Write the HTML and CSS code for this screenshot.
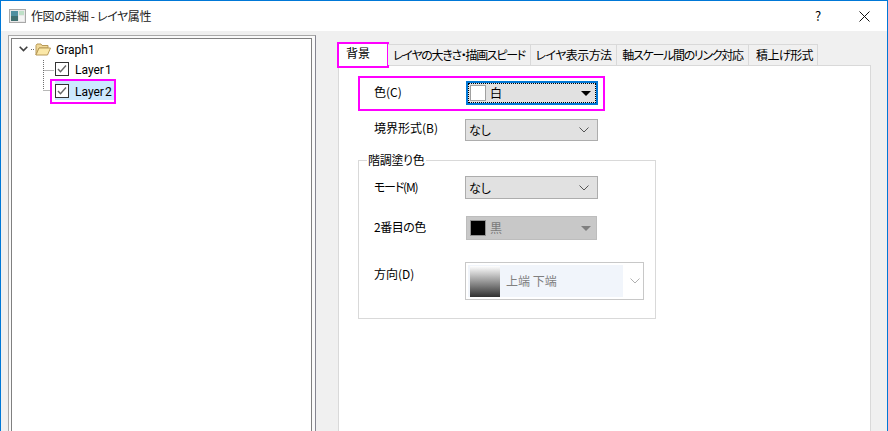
FILE: index.html
```html
<!DOCTYPE html>
<html lang="ja">
<head>
<meta charset="utf-8">
<title>作図の詳細 - レイヤ属性</title>
<link rel="stylesheet" href="styles.css">
</head>
<body>
<div class="window">
  <header class="titlebar">
    <svg class="app-icon" width="17" height="14" viewBox="0 0 17 14">
      <rect x="0.5" y="0.5" width="16" height="13" fill="#e8e8e8" stroke="#a8a8a8"/>
      <rect x="2" y="2" width="7" height="10" fill="#4f8f9f"/>
      <rect x="2" y="7" width="7" height="5" fill="#3f6f6f"/>
      <rect x="10" y="2" width="5" height="4" fill="#bfe0c8"/>
      <rect x="10" y="7" width="5" height="5" fill="#f4f4f4"/>
    </svg>
    <span class="title">作図の詳細 - レイヤ属性</span>
    <span class="help">?</span>
    <svg class="close" width="11" height="11" viewBox="0 0 11 11">
      <path d="M0.5 0.5L10.5 10.5M10.5 0.5L0.5 10.5" stroke="#111" stroke-width="1" fill="none"/>
    </svg>
  </header>
  <div class="body">
    <aside class="tree-frame">
      <div class="tree">
        <svg class="tree-lines" width="30" height="60" viewBox="0 0 30 60">
          <path d="M5 10.5H9M17.5 21V51M17.5 31.5H28M17.5 51.5H24" stroke="#707070" stroke-width="1" stroke-dasharray="1 1" fill="none"/>
        </svg>
        <div class="tree-row root">
          <svg class="chevron" width="9" height="6" viewBox="0 0 9 6"><path d="M0.7 0.8L4.5 4.6L8.3 0.8" stroke="#404040" stroke-width="1.6" fill="none"/></svg>
          <svg class="folder" width="16" height="13" viewBox="0 0 16 13">
            <path d="M1 2.5L2 1H6L7 2.5H13V5H4L1 12Z" fill="#f0d898" stroke="#b89a58"/>
            <path d="M1 12L4 5H15.5L12.5 12Z" fill="#fbe8a8" stroke="#b89a58"/>
          </svg>
          <span class="node">Graph1</span>
        </div>
        <div class="tree-row leaf">
          <svg class="check" width="14" height="14" viewBox="0 0 14 14"><rect x="0.5" y="0.5" width="13" height="13" fill="#fff" stroke="#333"/><path d="M3 7L5.5 9.8L11 3.5" stroke="#666" stroke-width="1.4" fill="none"/></svg>
          <span class="node">Layer 1</span>
        </div>
        <div class="tree-row selected">
          <svg class="check" width="14" height="14" viewBox="0 0 14 14"><rect x="0.5" y="0.5" width="13" height="13" fill="#fff" stroke="#333"/><path d="M3 7L5.5 9.8L11 3.5" stroke="#666" stroke-width="1.4" fill="none"/></svg>
          <span class="node">Layer 2</span>
        </div>
      </div>
    </aside>
    <main class="props">
      <nav class="tabs">
        <div class="tab active t0">背景</div>
        <div class="tab t1">レイヤの大きさ・描画スピード</div>
        <div class="tab t2">レイヤ表示方法</div>
        <div class="tab t3">軸スケール間のリンク対応</div>
        <div class="tab t4">積上げ形式</div>
      </nav>
      <section class="page">
        <div class="row marked">
          <label class="lbl">色(C)</label>
          <div class="select focus">
            <div class="focus-inner">
              <span class="swatch white"></span><span class="val">白</span>
              <span class="tri"></span>
            </div>
          </div>
        </div>
        <div class="row plain border-row">
          <label class="lbl">境界形式(B)</label>
          <div class="select combo">
            <span>なし</span>
            <svg class="down" width="10" height="6" viewBox="0 0 10 6"><path d="M0.5 0.5L5 5L9.5 0.5" stroke="#555" fill="none"/></svg>
          </div>
        </div>
        <div class="group">
          <div class="legend">階調塗り色</div>
          <div class="row grp mode">
            <label class="lbl">モード(M)</label>
            <div class="select combo tall">
              <span>なし</span>
              <svg class="down" width="10" height="6" viewBox="0 0 10 6"><path d="M0.5 0.5L5 5L9.5 0.5" stroke="#555" fill="none"/></svg>
            </div>
          </div>
          <div class="row grp second">
            <label class="lbl">2番目の色</label>
            <div class="select disabled">
              <span class="swatch black"></span><span class="val">黒</span>
              <span class="tri grey"></span>
            </div>
          </div>
          <div class="row grp direction">
            <label class="lbl">方向(D)</label>
            <div class="select dir">
              <div class="dir-inner">
                <span class="gradient"></span>
                <span>上端 下端</span>
              </div>
              <svg class="down" width="10" height="6" viewBox="0 0 10 6"><path d="M0.5 0.5L5 5L9.5 0.5" stroke="#b0b0b0" fill="none"/></svg>
            </div>
          </div>
        </div>
      </section>
    </main>
  </div>
</div>
</body>
</html>
```
FILE: styles.css
```css
* { box-sizing: border-box; }
html, body { margin: 0; padding: 0; height: 100%; overflow: hidden; }
body {
  font-family: "Noto Sans CJK JP", "Noto Sans", sans-serif;
  font-size: 12px;
  line-height: 14px;
  color: #000;
  font-feature-settings: "palt";
  background: #f0f0f0;
}
.window {
  width: 888px; height: 431px;
  display: flex; flex-direction: column;
  border: 1px solid #0078d7; border-bottom: 0;
  overflow: hidden;
}
.titlebar {
  height: 30px; flex: none;
  background: #fff;
  display: flex; align-items: center;
  padding-left: 8px;
}
.app-icon { margin-right: 5px; }
.title { flex: 1; font-size: 12px; letter-spacing: -0.4px; color: #222; }
.help { width: 12px; margin-right: 35px; padding-left: 3px; font-size: 13px; }
.close { margin-right: 17px; }

.body {
  flex: 1; min-height: 0;
  display: flex;
  padding: 4px 0 0 7px;
}
.tree-frame {
  width: 308px; height: 420px; flex: none;
  border: 1px solid #a8a8a8; border-right-color: #858590;
  padding: 2px 3px 0 2px;
  background: #fafafa;
}
.tree {
  position: relative;
  height: 100%;
  background: #fff;
  border: 1px solid #808080;
  font-family: Roboto, "Noto Sans", sans-serif;
  word-spacing: -2px;
}
.tree-lines { position: absolute; left: 14px; top: 0; }
.tree-row { display: flex; align-items: center; height: 20px; white-space: nowrap; }
.node { padding-top: 2px; }
.root { padding-left: 7px; position: relative; }
.chevron { margin-right: 7px; flex: none; }
.folder { margin-right: 5px; flex: none; }
.leaf { margin-left: 43px; position: relative; }
.check { margin-right: 6px; flex: none; }
.selected {
  position: relative;
  width: 66px; height: 25px;
  margin-left: 38px;
  border: 2px solid #ff00ff;
  padding: 0 0 2px 3px;
  background: #cce8ff;
  background-clip: content-box;
}

.props { margin-left: 22px; padding-top: 9px; width: 533px; flex: none; }
.tabs { display: flex; align-items: flex-end; height: 22px; margin-bottom: -1px; padding-left: 1px; position: relative; z-index: 1; }
.tab {
  height: 21px;
  margin-bottom: 1px;
  background: #f0f0f0;
  border: 1px solid #d9d9d9; border-bottom: 0; border-left: 0;
  text-align: center;
  line-height: 19px;
  white-space: nowrap;
  overflow: hidden;
}
.t0 { width: 48px; }
.t1 { width: 143px; margin-left: 1px; letter-spacing: -1.3px; }
.t2 { width: 86px; letter-spacing: -0.6px; }
.t3 { width: 132px; letter-spacing: -1.3px; }
.t4 { width: 69px; letter-spacing: -0.6px; padding-left: 3px; }
.active {
  height: 22px; margin-bottom: 0;
  background: #fff; border: 0;
  outline: 2px solid #ff00ff;
  line-height: 18px;
  padding-right: 10px;
  overflow: visible;
}
.page {
  height: 380px;
  background: #fff;
  border: 1px solid #d9d9d9;
  padding: 10px 0 0 19px;
}
.row { display: flex; }
.lbl { flex: none; width: 91px; }
.marked {
  width: 247px; height: 35px;
  border: 2px solid #ff00ff;
  padding: 3px 0 0 14px;
}
.marked .lbl { width: 92px; padding-top: 4px; }
.plain { padding-left: 16px; margin-top: 8px; }
.plain .lbl { padding-top: 2px; }

.select { display: flex; align-items: center; flex: none; }
.focus {
  width: 132px; height: 24px;
  border: 2px solid #0078d7;
  background: #e1e1e1;
}
.focus-inner {
  flex: 1; height: 100%;
  display: flex; align-items: center;
  border: 1px dotted #000;
  padding-left: 1px;
}
.swatch { width: 16px; height: 16px; border: 1px solid #a0a0a0; flex: none; }
.white { background: #fff; }
.black { background: #000; border-color: #909090; }
.val { margin-left: 4px; flex: 1; }
.tri {
  width: 0; height: 0; flex: none;
  border-left: 5px solid transparent;
  border-right: 5px solid transparent;
  border-top: 5px solid #000;
  margin-right: 4px;
}
.tri.grey { border-top-color: #7f7f7f; margin-right: 5px; }
.combo {
  width: 133px; height: 22px;
  background: #e1e1e1;
  border: 1px solid #adadad;
  padding: 0 8px 0 3px;
  justify-content: space-between;
}
.tall { height: 23px; }

.group {
  width: 298px; height: 159px;
  margin-top: 19px;
  border: 1px solid #d9d9d9;
}
.legend {
  width: fit-content;
  margin: -8px 0 9px 8px;
  padding: 0 1px;
  background: #fff;
  height: 14px;
  letter-spacing: -0.3px;
}
.grp { padding-left: 15px; }
.mode .lbl { padding-top: 4px; letter-spacing: -1.2px; }
.second { margin-top: 17px; }
.second .lbl { width: 92px; padding-top: 4px; letter-spacing: -0.5px; }
.disabled {
  width: 131px; height: 24px;
  background: #c8c8c8;
  border: 1px solid #bdbdbd;
  padding-left: 3px;
  color: #7a7a7a;
}
.direction { margin-top: 22px; }
.direction .lbl { padding-top: 5px; }
.dir {
  width: 179px; height: 38px;
  border: 1px solid #c8c8c8;
  background: #fff;
  padding: 2px 3px 2px 2px;
  color: #808080;
}
.dir-inner {
  flex: 1; height: 32px;
  background: #f1f5fb;
  display: flex; align-items: center;
  padding-left: 2px;
  margin-right: 7px;
}
.gradient {
  width: 30px; height: 31px; flex: none;
  margin-right: 6px;
  background: linear-gradient(#fff, #303030);
}
```
